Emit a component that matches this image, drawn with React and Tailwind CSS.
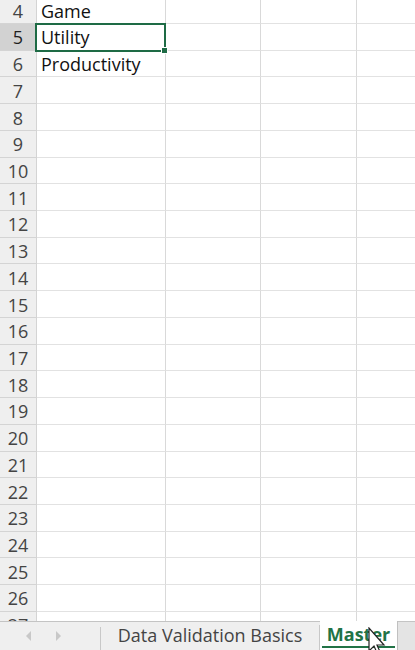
import React from "react";

const rows = [];
for (let i = 4; i <= 27; i++) rows.push(i);
const data = { 4: "Game", 5: "Utility", 6: "Productivity" };

function Row({ n }) {
  const sel = n === 5;
  return (
    <div className="flex h-[26.727px] shrink-0">
      <div
        className={
          "w-[37px] shrink-0 flex items-center justify-center border-r border-b border-[#d4d4d4] text-[18px] pt-[2px] " +
          (sel ? "bg-[#d2d2d2] text-[#1f1f1f]" : "bg-[#efefef] text-[#444444]")
        }
      >
        {n}
      </div>
      <div className="w-[129px] shrink-0 flex items-center pl-[4px] pt-[2px] border-r border-b border-r-[#d9d9d9] border-b-[#e2e2e2] text-[18px] text-[#111111] whitespace-nowrap">
        {data[n] || ""}
      </div>
      <div className="w-[95px] shrink-0 border-r border-b border-r-[#d9d9d9] border-b-[#e2e2e2]" />
      <div className="w-[96px] shrink-0 border-r border-b border-r-[#d9d9d9] border-b-[#e2e2e2]" />
      <div className="flex-1 border-b border-b-[#e2e2e2]" />
    </div>
  );
}

export default function App() {
  return (
    <div
      className="relative w-[415px] h-[650px] overflow-hidden bg-white flex flex-col"
      style={{ fontFamily: '"Open Sans", "Noto Sans", sans-serif' }}
    >
      <div className="relative h-[620.7px] shrink-0 overflow-hidden">
        <div className="flex flex-col -mt-[2.727px]">
          {rows.map((n) => (
            <Row key={n} n={n} />
          ))}
        </div>
        <div className="absolute left-[35px] top-[23px] w-[131px] h-[29px] border-2 border-[#1e6b45]" />
        <div className="absolute left-[161px] top-[47px] w-[7px] h-[7px] bg-[#1e6b45] border border-white" />
      </div>
      <div className="flex-1 flex items-stretch bg-[#efefef] border-t border-[#c4c4c4]">
        <div className="w-[101px] shrink-0 flex items-center border-r border-[#c8c8c8] mt-[5px]">
          <div className="w-[26px]" />
          <svg width="6" height="10" viewBox="0 0 6 10" className="-mt-[5px]">
            <path d="M5 0 L0 5 L5 10 Z" fill="#c8c8c8" />
          </svg>
          <div className="w-[23px]" />
          <svg width="6" height="10" viewBox="0 0 6 10" className="-mt-[5px]">
            <path d="M1 0 L6 5 L1 10 Z" fill="#c8c8c8" />
          </svg>
        </div>
        <div className="w-[219px] shrink-0 flex items-center justify-center border-r border-[#c8c8c8] text-[18px] text-[#444444] mt-[3px]">
          <span className="-mt-[3px]">Data Validation Basics</span>
        </div>
        <div className="relative w-[78px] shrink-0 bg-white flex items-center justify-center border-r border-[#c0c0c0] text-[18px] font-bold text-[#217346] -mt-[1px]">
          <span className="-mt-[1px]">Master</span>
          <div className="absolute left-[2px] right-[2px] bottom-[2px] h-[2px] bg-[#217346]" />
        </div>
        <div className="flex-1 bg-[#e4e4e4]" />
      </div>
      <svg
        className="absolute left-[368px] top-[627px]"
        width="20"
        height="30"
        viewBox="0 0 20 30"
      >
        <path d="M1 1 L1 24 L6 19 L10 28 L13 27 L9 18 L16 18 Z" fill="white" stroke="#222" strokeWidth="1.2" />
      </svg>
    </div>
  );
}
